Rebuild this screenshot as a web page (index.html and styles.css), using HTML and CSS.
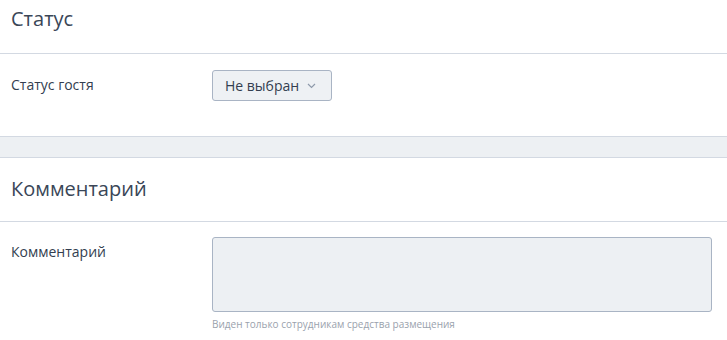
FILE: index.html
```html
<!DOCTYPE html>
<html lang="ru">
<head>
<meta charset="utf-8">
<link rel="stylesheet" href="styles.css">
</head>
<body>
<section class="section section--scrolled">
  <h2 class="section-title">Статус</h2>
  <div class="field-row">
    <div class="field-label">Статус гостя</div>
    <div class="field-control">
      <button class="select-btn" type="button">
        <span>Не выбран</span>
        <svg class="chevron" width="9" height="6" viewBox="0 0 9 6"><path d="M1 1l3.5 3.5L8 1" fill="none" stroke="#8e9aab" stroke-width="1.2"/></svg>
      </button>
    </div>
  </div>
</section>
<div class="band"></div>
<section class="section">
  <h2 class="section-title">Комментарий</h2>
  <div class="field-row field-row--comment">
    <div class="field-label">Комментарий</div>
    <div class="field-control field-control--wide">
      <textarea class="textarea"></textarea>
      <div class="hint">Виден только сотрудникам средства размещения</div>
    </div>
  </div>
</section>
</body>
</html>
```
FILE: styles.css
```css
html, body {
  margin: 0;
  padding: 0;
  background: #fff;
}
body {
  font-family: "Open Sans", "Liberation Sans", sans-serif;
  color: #333e50;
  width: 727px;
  height: 340px;
  overflow: hidden;
}
.section-title {
  margin: 0;
  font-size: 20px;
  line-height: 28px;
  font-weight: 400;
  color: #3a4657;
  padding: 17px 11px 18px;
  border-bottom: 1px solid #d3d9e2;
}
.section--scrolled .section-title {
  padding-top: 5px;
  padding-bottom: 20px;
}
.field-row {
  display: flex;
  padding: 16px 15px 35px 11px;
}
.field-row--comment {
  padding-top: 15px;
  padding-bottom: 10px;
}
.field-label {
  width: 201px;
  flex: none;
  font-size: 14px;
  line-height: 19px;
  padding-top: 5px;
  color: #333e50;
}
.field-control--wide {
  flex: 1;
  display: flex;
  flex-direction: column;
}
.select-btn {
  display: flex;
  align-items: center;
  gap: 8px;
  height: 31px;
  box-sizing: border-box;
  padding: 0 15px 0 12px;
  border: 1px solid #a9b4c4;
  border-radius: 3px;
  background: #eef1f4;
  font-family: inherit;
  font-size: 14px;
  color: #333e50;
  line-height: 29px;
}
.chevron {
  display: block;
  margin-top: 1px;
}
.band {
  height: 20px;
  background: #edf0f3;
  border-top: 1px solid #d3d9e2;
  border-bottom: 1px solid #d3d9e2;
}
.textarea {
  display: block;
  width: 100%;
  box-sizing: border-box;
  height: 75px;
  margin: 0;
  border: 1px solid #a9b4c4;
  border-radius: 3px;
  background: #edf0f3;
  resize: none;
}
.hint {
  margin-top: 5px;
  font-size: 10px;
  line-height: 14px;
  color: #9aa2ad;
}
```
